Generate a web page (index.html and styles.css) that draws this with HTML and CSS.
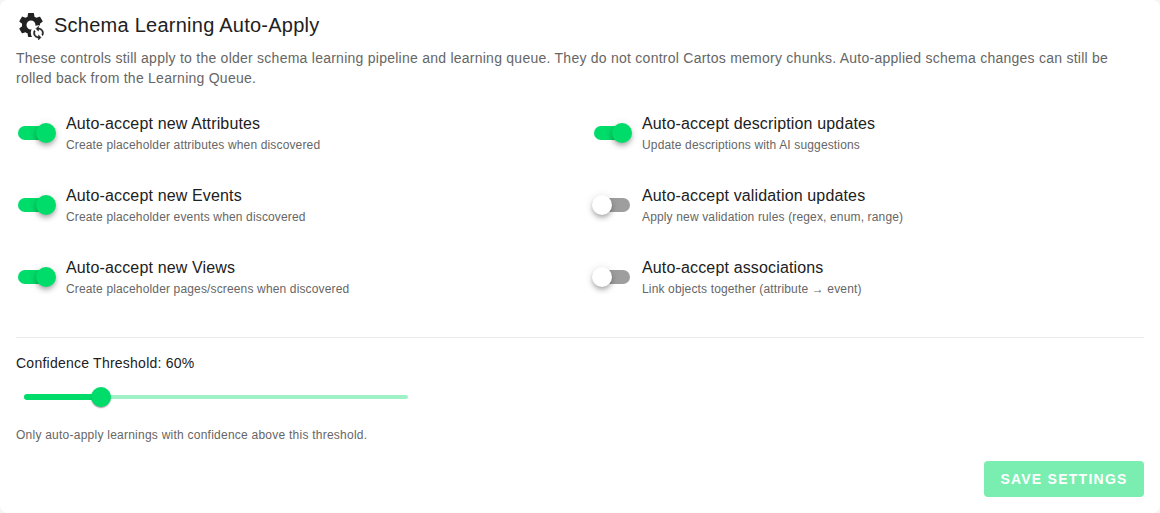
FILE: index.html
```html
<!DOCTYPE html>
<html lang="en">
<head>
    <meta charset="UTF-8">
    <meta name="viewport" content="width=device-width, initial-scale=1.0">
    <title>Schema Learning Auto-Apply</title>
    <link rel="stylesheet" href="styles.css">
</head>
<body>

    <div class="card">
        <div class="header">
            <svg class="header-icon" viewBox="0 0 24 24">
                <path fill="#212121" d="M19.14 12.94c.04-.3.06-.61.06-.94 0-.32-.02-.64-.07-.94l2.03-1.58c.18-.14.23-.41.12-.61l-1.92-3.32c-.12-.22-.37-.29-.59-.22l-2.39.96c-.5-.38-1.03-.7-1.62-.94l-.36-2.54c-.04-.24-.24-.41-.48-.41h-3.84c-.24 0-.43.17-.47.41l-.36 2.54c-.59.24-1.13.57-1.62.94l-2.39-.96c-.22-.08-.47 0-.59.22L2.74 8.87c-.12.21-.08.47.12.61l2.03 1.58c-.05.3-.09.63-.09.94s.02.64.07.94l-2.03 1.58c-.18.14-.23.41-.12.61l1.92 3.32c.12.22.37.29.59.22l2.39-.96c.5.38 1.03.7 1.62.94l.36 2.54c.05.24.24.41.48.41h3.84c.24 0 .44-.17.47-.41l.36-2.54c.59-.24 1.13-.56 1.62-.94l2.39.96c.22.08.47 0 .59-.22l1.92-3.32c.12-.22.07-.47-.12-.61l-2.01-1.58zM12 15.6c-1.98 0-3.6-1.62-3.6-3.6s1.62-3.6 3.6-3.6 3.6 1.62 3.6 3.6-1.62 3.6-3.6 3.6z"/>
                <circle fill="#fff" cx="17.8" cy="18.2" r="6"/>
                <path fill="#212121" stroke="#212121" stroke-width=".8" transform="translate(12 12.4) scale(.5)" d="M12 4V1L8 5l4 4V6c3.31 0 6 2.69 6 6 0 1.01-.25 1.97-.7 2.8l1.46 1.46C19.54 15.03 20 13.57 20 12c0-4.42-3.58-8-8-8zm0 14c-3.31 0-6-2.69-6-6 0-1.01.25-1.97.7-2.8L5.24 7.74C4.46 8.97 4 10.43 4 12c0 4.42 3.58 8 8 8v3l4-4-4-4v3z"/>
            </svg>
            <h2 class="title">Schema Learning Auto-Apply</h2>
        </div>
        <p class="intro">These controls still apply to the older schema learning pipeline and learning queue. They do not control Cartos memory chunks. Auto-applied schema changes can still be rolled back from the Learning Queue.</p>

        <div class="options">
            <div class="option">
                <span class="switch on"><span class="thumb"></span></span>
                <div>
                    <div class="option-name">Auto-accept new Attributes</div>
                    <div class="option-hint">Create placeholder attributes when discovered</div>
                </div>
            </div>
            <div class="option">
                <span class="switch on"><span class="thumb"></span></span>
                <div>
                    <div class="option-name">Auto-accept description updates</div>
                    <div class="option-hint">Update descriptions with AI suggestions</div>
                </div>
            </div>
            <div class="option">
                <span class="switch on"><span class="thumb"></span></span>
                <div>
                    <div class="option-name">Auto-accept new Events</div>
                    <div class="option-hint">Create placeholder events when discovered</div>
                </div>
            </div>
            <div class="option">
                <span class="switch"><span class="thumb"></span></span>
                <div>
                    <div class="option-name">Auto-accept validation updates</div>
                    <div class="option-hint">Apply new validation rules (regex, enum, range)</div>
                </div>
            </div>
            <div class="option">
                <span class="switch on"><span class="thumb"></span></span>
                <div>
                    <div class="option-name">Auto-accept new Views</div>
                    <div class="option-hint">Create placeholder pages/screens when discovered</div>
                </div>
            </div>
            <div class="option">
                <span class="switch"><span class="thumb"></span></span>
                <div>
                    <div class="option-name">Auto-accept associations</div>
                    <div class="option-hint">Link objects together (attribute → event)</div>
                </div>
            </div>
        </div>

        <hr class="divider">

        <div class="threshold-label">Confidence Threshold: 60%</div>
        <div class="slider">
            <div class="slider-fill"></div>
            <span class="slider-thumb"></span>
        </div>
        <div class="threshold-hint">Only auto-apply learnings with confidence above this threshold.</div>

        <div class="actions">
            <button class="save" disabled>Save Settings</button>
        </div>
    </div>

</body>
</html>
```

FILE: styles.css
```css
* {
    box-sizing: border-box;
}

body {
    margin: 0;
    height: 513px;
    overflow: hidden;
    background-color: #f5f5f5;
    font-family: "Liberation Sans", Arial, sans-serif;
    color: #212121;
}

.card {
    height: 513px;
    padding: 8px 16px 16px;
    background-color: #fff;
    border-radius: 8px;
}

.header {
    display: flex;
    align-items: center;
    gap: 8px;
    height: 34px;
}

.header-icon {
    width: 30px;
    height: 30px;
}

.title {
    margin: 0;
    font-size: 20px;
    font-weight: 400;
    line-height: 34px;
    letter-spacing: 0.25px;
}

.intro {
    margin: 6px 0 0;
    font-size: 14px;
    line-height: 20px;
    letter-spacing: 0.25px;
    color: #666;
}

.options {
    display: grid;
    grid-template-columns: 1fr 1fr;
    column-gap: 24px;
    row-gap: 30px;
    margin-top: 24px;
}

.option {
    display: flex;
    align-items: center;
    gap: 12px;
}

.switch {
    position: relative;
    flex: none;
    width: 36px;
    height: 14px;
    margin-left: 2px;
    border-radius: 7px;
    background-color: #9e9e9e;
}

.switch.on {
    background-color: #00dc6a;
}

.thumb {
    position: absolute;
    top: -3px;
    left: -2px;
    width: 20px;
    height: 20px;
    border-radius: 50%;
    background-color: #fff;
    box-shadow: 0 2px 4px -1px rgba(0, 0, 0, 0.2), 0 4px 5px rgba(0, 0, 0, 0.14), 0 1px 10px rgba(0, 0, 0, 0.12);
}

.switch.on .thumb {
    left: 18px;
    background-color: #00dc6a;
}

.option-name {
    font-size: 16px;
    line-height: 24px;
    letter-spacing: 0.15px;
}

.option-hint {
    font-size: 12px;
    line-height: 18px;
    letter-spacing: 0.15px;
    color: #666;
}

.divider {
    margin: 39px 0 0;
    border: none;
    border-top: 1px solid #ebebeb;
}

.threshold-label {
    margin-top: 15px;
    font-size: 14px;
    line-height: 20px;
    letter-spacing: 0.24px;
}

.slider {
    position: relative;
    width: 384px;
    height: 4px;
    margin: 22px 0 0 8px;
    border-radius: 2px;
    background-color: #9ff2c6;
}

.slider-fill {
    position: absolute;
    top: -1px;
    left: 0;
    width: 20%;
    height: 6px;
    border-radius: 3px;
    background-color: #00dc6a;
}

.slider-thumb {
    position: absolute;
    top: -8px;
    left: 66.8px;
    width: 20px;
    height: 20px;
    border-radius: 50%;
    background-color: #00dc6a;
    box-shadow: 0 2px 1px -1px rgba(0, 0, 0, 0.2), 0 1px 1px rgba(0, 0, 0, 0.14), 0 1px 3px rgba(0, 0, 0, 0.12);
}

.threshold-hint {
    margin-top: 26px;
    font-size: 12px;
    line-height: 20px;
    letter-spacing: 0.24px;
    color: #666;
}

.actions {
    display: flex;
    justify-content: flex-end;
    margin-top: 16px;
}

.save {
    width: 160px;
    height: 36px;
    border: none;
    border-radius: 4px;
    background-color: #7aeeb0;
    color: #fff;
    font-family: "Liberation Sans", Arial, sans-serif;
    font-size: 14px;
    font-weight: 700;
    letter-spacing: 1.25px;
    text-transform: uppercase;
}
```
